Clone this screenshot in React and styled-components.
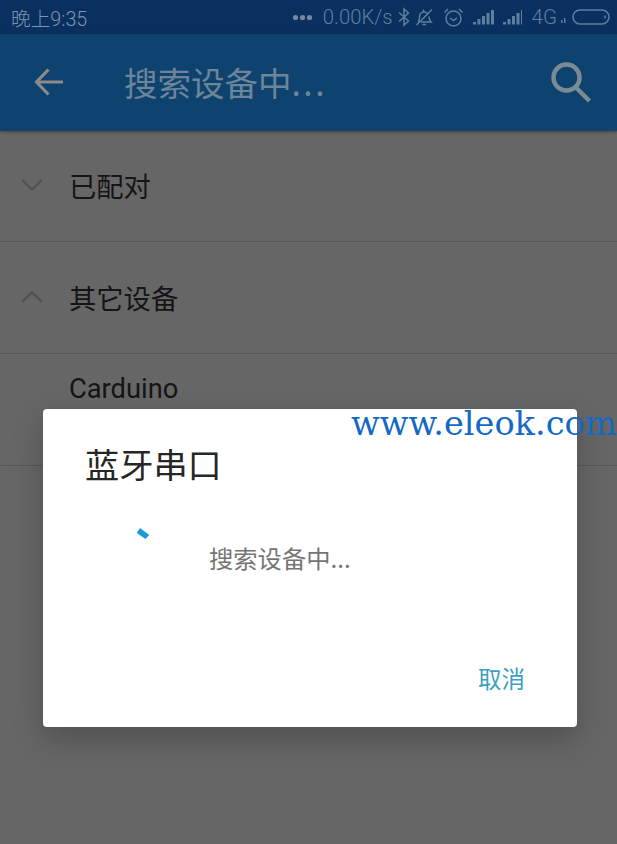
import React from "react";
import styled, { createGlobalStyle } from "styled-components";

const Global = createGlobalStyle`
  html, body { margin: 0; padding: 0; background: #666; }
  * { box-sizing: border-box; }
  body { font-family: Roboto, "Noto Sans CJK SC", sans-serif; }
`;

const Page = styled.div`
  position: relative;
  width: 617px;
  height: 844px;
  overflow: hidden;
  background: #666666;
`;

const StatusBar = styled.div`
  height: 34px;
  background: #0a3060;
  color: #5f7f9f;
  display: flex;
  align-items: center;
  padding: 0 7px 0 11px;
`;

const Clock = styled.span`
  font-family: Roboto, "Noto Sans CJK SC", sans-serif;
  font-weight: 300;
  font-size: 19.7px;
  color: #7d93ab;
`;

const StatusRight = styled.div`
  margin-left: auto;
  display: flex;
  align-items: center;
  color: #5f7f9f;
`;

const Speed = styled.span`
  font-weight: 300;
  font-size: 20.3px;
  margin: 0 5px 0 9px;
`;

const Net = styled.span`
  font-weight: 300;
  font-size: 20.5px;
  margin-left: 7px;
`;

const StatusIcon = styled.svg`
  display: block;
  flex: none;
  margin-left: ${(p) => p.$gap ?? 0}px;
`;

const AppBar = styled.header`
  height: 97px;
  background: #0e4370;
  display: flex;
  align-items: center;
  padding: 0 24px 2px 34px;
  box-shadow: 0 1px 3px rgba(0, 0, 0, 0.35);
  position: relative;
`;

const Title = styled.h1`
  margin: 0 0 0 60px;
  font-family: "Noto Sans CJK SC", sans-serif;
  font-weight: 400;
  font-size: 33.5px;
  line-height: 1;
  color: #6e8599;
  flex: 1;
`;

const TitleDots = styled.span`
  letter-spacing: 2.5px;
`;

const Row = styled.div`
  height: ${(p) => p.$h}px;
  display: flex;
  align-items: center;
  padding: 0 0 ${(p) => p.$pb ?? 0}px 20px;
  border-bottom: 1px solid #585858;
`;

const RowLabel = styled.span`
  margin-left: ${(p) => p.$ml}px;
  font-family: Roboto, "Noto Sans CJK SC", sans-serif;
  font-size: 27.3px;
  color: #151515;
`;

const Dialog = styled.div`
  position: absolute;
  left: 43px;
  top: 409px;
  width: 534px;
  height: 318px;
  background: #fff;
  border-radius: 4px;
  box-shadow: 0 12px 32px rgba(0, 0, 0, 0.22);
  padding: 32px 42px 0;
  display: flex;
  flex-direction: column;
`;

const DialogTitle = styled.h2`
  margin: 0;
  font-family: "Noto Sans CJK SC", sans-serif;
  font-weight: 400;
  font-size: 34.2px;
  line-height: 44px;
  color: #262626;
`;

const DialogBody = styled.div`
  display: flex;
  height: 128px;
  padding-top: 32px;
`;

const Spinner = styled.svg`
  display: block;
  margin-left: 7px;
  flex: none;
`;

const BodyText = styled.p`
  margin: 26px 0 0 57px;
  font-family: "Noto Sans CJK SC", sans-serif;
  font-size: 24.3px;
  line-height: 30px;
  color: #757575;
`;

const DialogActions = styled.div`
  display: flex;
  justify-content: flex-end;
  margin-top: 50px;
  margin-right: 10px;
`;

const CancelButton = styled.button`
  border: 0;
  background: none;
  padding: 0;
  font-family: "Noto Sans CJK SC", sans-serif;
  font-size: 23.5px;
  line-height: 30px;
  color: #3d9fc2;
`;

const Watermark = styled.div`
  position: absolute;
  left: 351px;
  top: 401px;
  font-family: "DejaVu Serif", serif;
  font-size: 33.6px;
  line-height: 46px;
  white-space: nowrap;
  color: #1469c4;
`;

const Signal = ({ gap, last }) => (
  <StatusIcon $gap={gap} width="23" height="18" viewBox="0 0 23 18" fill="currentColor">
    <rect x="1" y="14" width="3" height="2.5" />
    <rect x="5.5" y="11" width="3" height="5.5" />
    <rect x="10" y="8" width="3" height="8.5" />
    <rect x="14.5" y="5" width="3" height="11.5" />
    <rect x="19" y="2" width={last ? 1 : 3} height="14.5" />
  </StatusIcon>
);

export default function App() {
  return (
    <Page>
      <Global />
      <StatusBar>
        <Clock>晚上9:35</Clock>
        <StatusRight>
          <StatusIcon width="22" height="8" viewBox="0 0 22 8" fill="#74889f">
            <circle cx="3.5" cy="4.5" r="2.6" />
            <circle cx="10.5" cy="4.5" r="2.6" />
            <circle cx="17.5" cy="4.5" r="2.6" />
          </StatusIcon>
          <Speed>0.00K/s</Speed>
          <StatusIcon width="12" height="20" viewBox="0 0 12 20" fill="none" stroke="currentColor" strokeWidth="1.5">
            <path d="M1 5.5 10.5 14 6 18V2l4.5 4L1 14.5" />
          </StatusIcon>
          <StatusIcon $gap={4} width="20" height="20" viewBox="0 0 20 20" fill="none" stroke="currentColor" strokeWidth="1.5">
            <path d="M4 15c1.500-1.500 1.500-3 1.500-5 0-3 2-5 4.500-5 2 0 3.500 1 4 3M15 9.500c0 2.500.5 4 2 5.500H7M8.500 17.500h3.500M9.500 2.500v2M2.500 18 18 2.500" />
          </StatusIcon>
          <StatusIcon $gap={9} width="21" height="21" viewBox="0 0 21 21" fill="none" stroke="currentColor" strokeWidth="1.5">
            <circle cx="10.500" cy="11.500" r="7.500" />
            <path d="M7 11l3.500 2.500L14 11M1.500 5.500 5 2M19.500 5.500 16 2" />
          </StatusIcon>
          <Signal gap={8} />
          <Signal gap={7} last />
          <Net>4G</Net>
          <StatusIcon $gap={4} width="6" height="18" viewBox="0 0 6 18" fill="currentColor">
            <rect x="0" y="12" width="1.500" height="3" />
            <rect x="3" y="10" width="1.500" height="5" />
          </StatusIcon>
          <StatusIcon $gap={5} width="38" height="18" viewBox="0 0 38 18" fill="none" stroke="currentColor" strokeWidth="1.500">
            <rect x="1" y="2" width="36" height="14" rx="7" />
            <path d="M33 7.500v3" />
          </StatusIcon>
        </StatusRight>
      </StatusBar>
      <AppBar>
        <svg width="30" height="28" viewBox="0 0 30 28" fill="none" stroke="#8a8a8a" strokeWidth="3.200" style={{ display: "block", flex: "none" }}>
          <path d="M29 14H3M14.500 1.500 2.500 14l12 12.500" />
        </svg>
        <Title>搜索设备中<TitleDots>...</TitleDots></Title>
        <svg width="42" height="44" viewBox="0 0 42 44" fill="none" stroke="#7c8a94" strokeWidth="4.500" style={{ display: "block", flex: "none" }}>
          <circle cx="15.500" cy="17.500" r="13" />
          <path d="M25 27.500 38.500 41" />
        </svg>
      </AppBar>
      <Row $h={111} $pb={2}>
        <svg width="24" height="14" viewBox="0 0 24 14" fill="none" stroke="#505050" strokeWidth="2.200" style={{ display: "block" }}>
          <path d="M2 2l10 9.500L22 2" />
        </svg>
        <RowLabel $ml={25}>已配对</RowLabel>
      </Row>
      <Row $h={112} $pb={2}>
        <svg width="24" height="14" viewBox="0 0 24 14" fill="none" stroke="#505050" strokeWidth="2.200" style={{ display: "block" }}>
          <path d="M2 12 12 2.500 22 12" />
        </svg>
        <RowLabel $ml={25}>其它设备</RowLabel>
      </Row>
      <Row $h={112} $pb={42}>
        <RowLabel $ml={49}>Carduino</RowLabel>
      </Row>
      <Dialog>
        <DialogTitle>蓝牙串口</DialogTitle>
        <DialogBody>
          <Spinner width="60" height="60" viewBox="0 0 60 60">
            <path d="M48 11 57.300 18 53.500 22 44.700 16Z" fill="#1c9ad6" />
          </Spinner>
          <BodyText>搜索设备中...</BodyText>
        </DialogBody>
        <DialogActions>
          <CancelButton>取消</CancelButton>
        </DialogActions>
      </Dialog>
      <Watermark>www.eleok.com</Watermark>
    </Page>
  );
}
